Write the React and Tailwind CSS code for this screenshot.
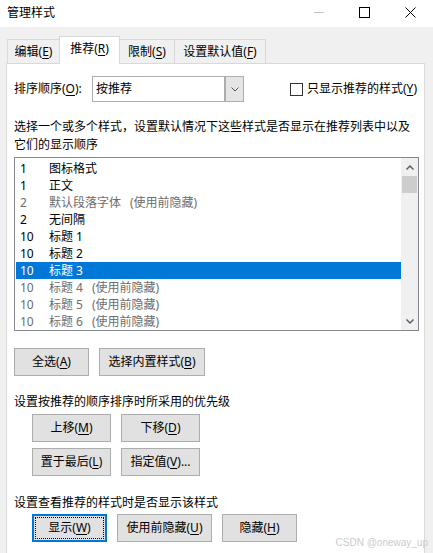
function Mn({ children }) {
  return <span className="underline underline-offset-2">{children}</span>
}

function Btn({ w, children, focused }) {
  if (focused) {
    return (
      <div className={`${w} h-[28px] border-2 border-[#0078d7] bg-[#e1e1e1] p-[1px]`}>
        <div className="w-full h-full border border-dotted border-black flex items-center justify-center">
          {children}
        </div>
      </div>
    )
  }
  return (
    <div className={`${w} h-[28px] border border-[#adadad] bg-[#e1e1e1] flex items-center justify-center`}>
      {children}
    </div>
  )
}

const rows = [
  { n: '1', name: '图标格式' },
  { n: '1', name: '正文' },
  { n: '2', name: '默认段落字体', hidden: true },
  { n: '2', name: '无间隔' },
  { n: '10', name: '标题 1' },
  { n: '10', name: '标题 2' },
  { n: '10', name: '标题 3', selected: true },
  { n: '10', name: '标题 4', hidden: true },
  { n: '10', name: '标题 5', hidden: true },
  { n: '10', name: '标题 6', hidden: true },
]

export default function App() {
  return (
    <div className="w-[433px] h-[553px] bg-[#f0f0f0] overflow-hidden relative text-[12px] text-black font-['Noto_Sans','Noto_Sans_CJK_SC',sans-serif]">
      {/* Title bar */}
      <div className="h-[27px] bg-white flex items-center">
        <span className="ml-[7px] leading-[16px] -mt-[2px] text-[12px]">管理样式</span>
        <div className="ml-auto flex items-center -mt-[3px]">
          <svg className="w-[10px] h-[10px] mr-[35px]" viewBox="0 0 10 10">
            <line x1="0" y1="5.5" x2="10" y2="5.5" stroke="#c4c4c4" strokeWidth="1" />
          </svg>
          <svg className="w-[11px] h-[11px] mr-[35px]" viewBox="0 0 11 11">
            <rect x="0.5" y="0.5" width="10" height="10" fill="none" stroke="#000" strokeWidth="1" />
          </svg>
          <svg className="w-[11px] h-[11px] mr-[17px]" viewBox="0 0 11 11">
            <path d="M0.5 0.5 L10.5 10.5 M10.5 0.5 L0.5 10.5" stroke="#000" strokeWidth="1" />
          </svg>
        </div>
      </div>

      {/* Tabs */}
      <div className="flex items-end h-[36px] pl-[7px] relative z-10">
        <div className="w-[53px] h-[24px] border border-b-0 border-[#d9d9d9] bg-[#f0f0f0] flex items-center justify-center">
          <span>编辑(<Mn>E</Mn>)</span>
        </div>
        <div className="w-[61px] h-[28px] -mb-px border border-b-0 border-[#d9d9d9] bg-white flex items-center justify-center -ml-px">
          <span className="-mt-[3px]">推荐(<Mn>R</Mn>)</span>
        </div>
        <div className="w-[56px] h-[24px] border border-b-0 border-[#d9d9d9] bg-[#f0f0f0] flex items-center justify-center -ml-px">
          <span>限制(<Mn>S</Mn>)</span>
        </div>
        <div className="w-[92px] h-[24px] border border-b-0 border-[#d9d9d9] bg-[#f0f0f0] flex items-center justify-center -ml-px">
          <span>设置默认值(<Mn>F</Mn>)</span>
        </div>
      </div>

      {/* Panel */}
      <div className="ml-[6px] w-[419px] h-[520px] bg-white border border-[#d9d9d9] pt-[12px] pl-[7px]">
        {/* Sort order */}
        <div className="flex items-center h-[26px]">
          <span className="w-[78px]">排序顺序(<Mn>O</Mn>):</span>
          <div className="w-[152px] h-[26px] border border-[#adadad] flex">
            <div className="flex-1 flex items-center pl-[3px]">按推荐</div>
            <div className="w-[18px] h-full bg-[#e5e5e5] border-l border-[#adadad] outline outline-1 outline-[#adadad] flex items-center justify-center">
              <svg className="w-[8px] h-[5px]" viewBox="0 0 8 5">
                <path d="M0.5 0.5 L4 4 L7.5 0.5" fill="none" stroke="#555" strokeWidth="1" />
              </svg>
            </div>
          </div>
          <div className="ml-[46px] w-[13px] h-[13px] border border-[#333] bg-white" />
          <span className="ml-[4px]">只显示推荐的样式(<Mn>Y</Mn>)</span>
        </div>

        {/* Description */}
        <p className="mt-[16px] leading-[18px]">
          选择一个或多个样式，设置默认情况下这些样式是否显示在推荐列表中以及
          <br />
          它们的显示顺序
        </p>

        {/* List box */}
        <div className="mt-[3px] w-[405px] h-[174px] border border-[#828790] flex overflow-hidden">
          <div className="w-[386px] pl-[1px] pt-[2px]">
            {rows.map((r, i) => (
              <div
                key={i}
                className={`h-[17px] flex items-center leading-[17px] ${
                  r.selected ? 'bg-[#0078d7] text-white' : r.hidden ? 'text-[#6d6d6d]' : 'text-black'
                }`}
              >
                <span className="w-[33px] pl-[4px]">{r.n}</span>
                <span>
                  {r.name}
                  {r.hidden && <span className="ml-[9px]">(使用前隐藏)</span>}
                </span>
              </div>
            ))}
          </div>
          <div className="w-[17px] h-full bg-[#f0f0f0] flex flex-col items-center">
            <div className="h-[18px] flex items-center justify-center">
              <svg className="w-[8px] h-[5px]" viewBox="0 0 8 5">
                <path d="M0.5 4.5 L4 1 L7.5 4.5" fill="none" stroke="#606060" strokeWidth="1.5" />
              </svg>
            </div>
            <div className="w-[15px] h-[17px] bg-[#cdcdcd]" />
            <div className="mt-auto h-[18px] flex items-center justify-center">
              <svg className="w-[8px] h-[5px]" viewBox="0 0 8 5">
                <path d="M0.5 0.5 L4 4 L7.5 0.5" fill="none" stroke="#606060" strokeWidth="1.5" />
              </svg>
            </div>
          </div>
        </div>

        {/* Select buttons */}
        <div className="mt-[17px] flex gap-[10px]">
          <Btn w="w-[75px]">全选(<Mn>A</Mn>)</Btn>
          <Btn w="w-[106px]">选择内置样式(<Mn>B</Mn>)</Btn>
        </div>

        {/* Priority */}
        <p className="mt-[17px] leading-[18px]">设置按推荐的顺序排序时所采用的优先级</p>
        <div className="ml-[18px] mt-[3px] grid grid-cols-[79px_79px] gap-x-[10px] gap-y-[6px] w-fit">
          <Btn w="w-[79px]">上移(<Mn>M</Mn>)</Btn>
          <Btn w="w-[79px]">下移(<Mn>D</Mn>)</Btn>
          <Btn w="w-[79px]">置于最后(<Mn>L</Mn>)</Btn>
          <Btn w="w-[79px]">指定值(<Mn>V</Mn>)...</Btn>
        </div>

        {/* Visibility */}
        <p className="mt-[18px] leading-[18px]">设置查看推荐的样式时是否显示该样式</p>
        <div className="ml-[18px] mt-[2px] flex gap-[10px]">
          <Btn w="w-[75px]" focused>显示(<Mn>W</Mn>)</Btn>
          <Btn w="w-[95px]">使用前隐藏(<Mn>U</Mn>)</Btn>
          <Btn w="w-[75px]">隐藏(<Mn>H</Mn>)</Btn>
        </div>
      </div>

      {/* Watermark */}
      <div className="absolute right-[5px] bottom-[3px] text-[10px] text-[#cccccc] font-['Liberation_Sans',sans-serif]">
        CSDN @oneway_up
      </div>
    </div>
  )
}
